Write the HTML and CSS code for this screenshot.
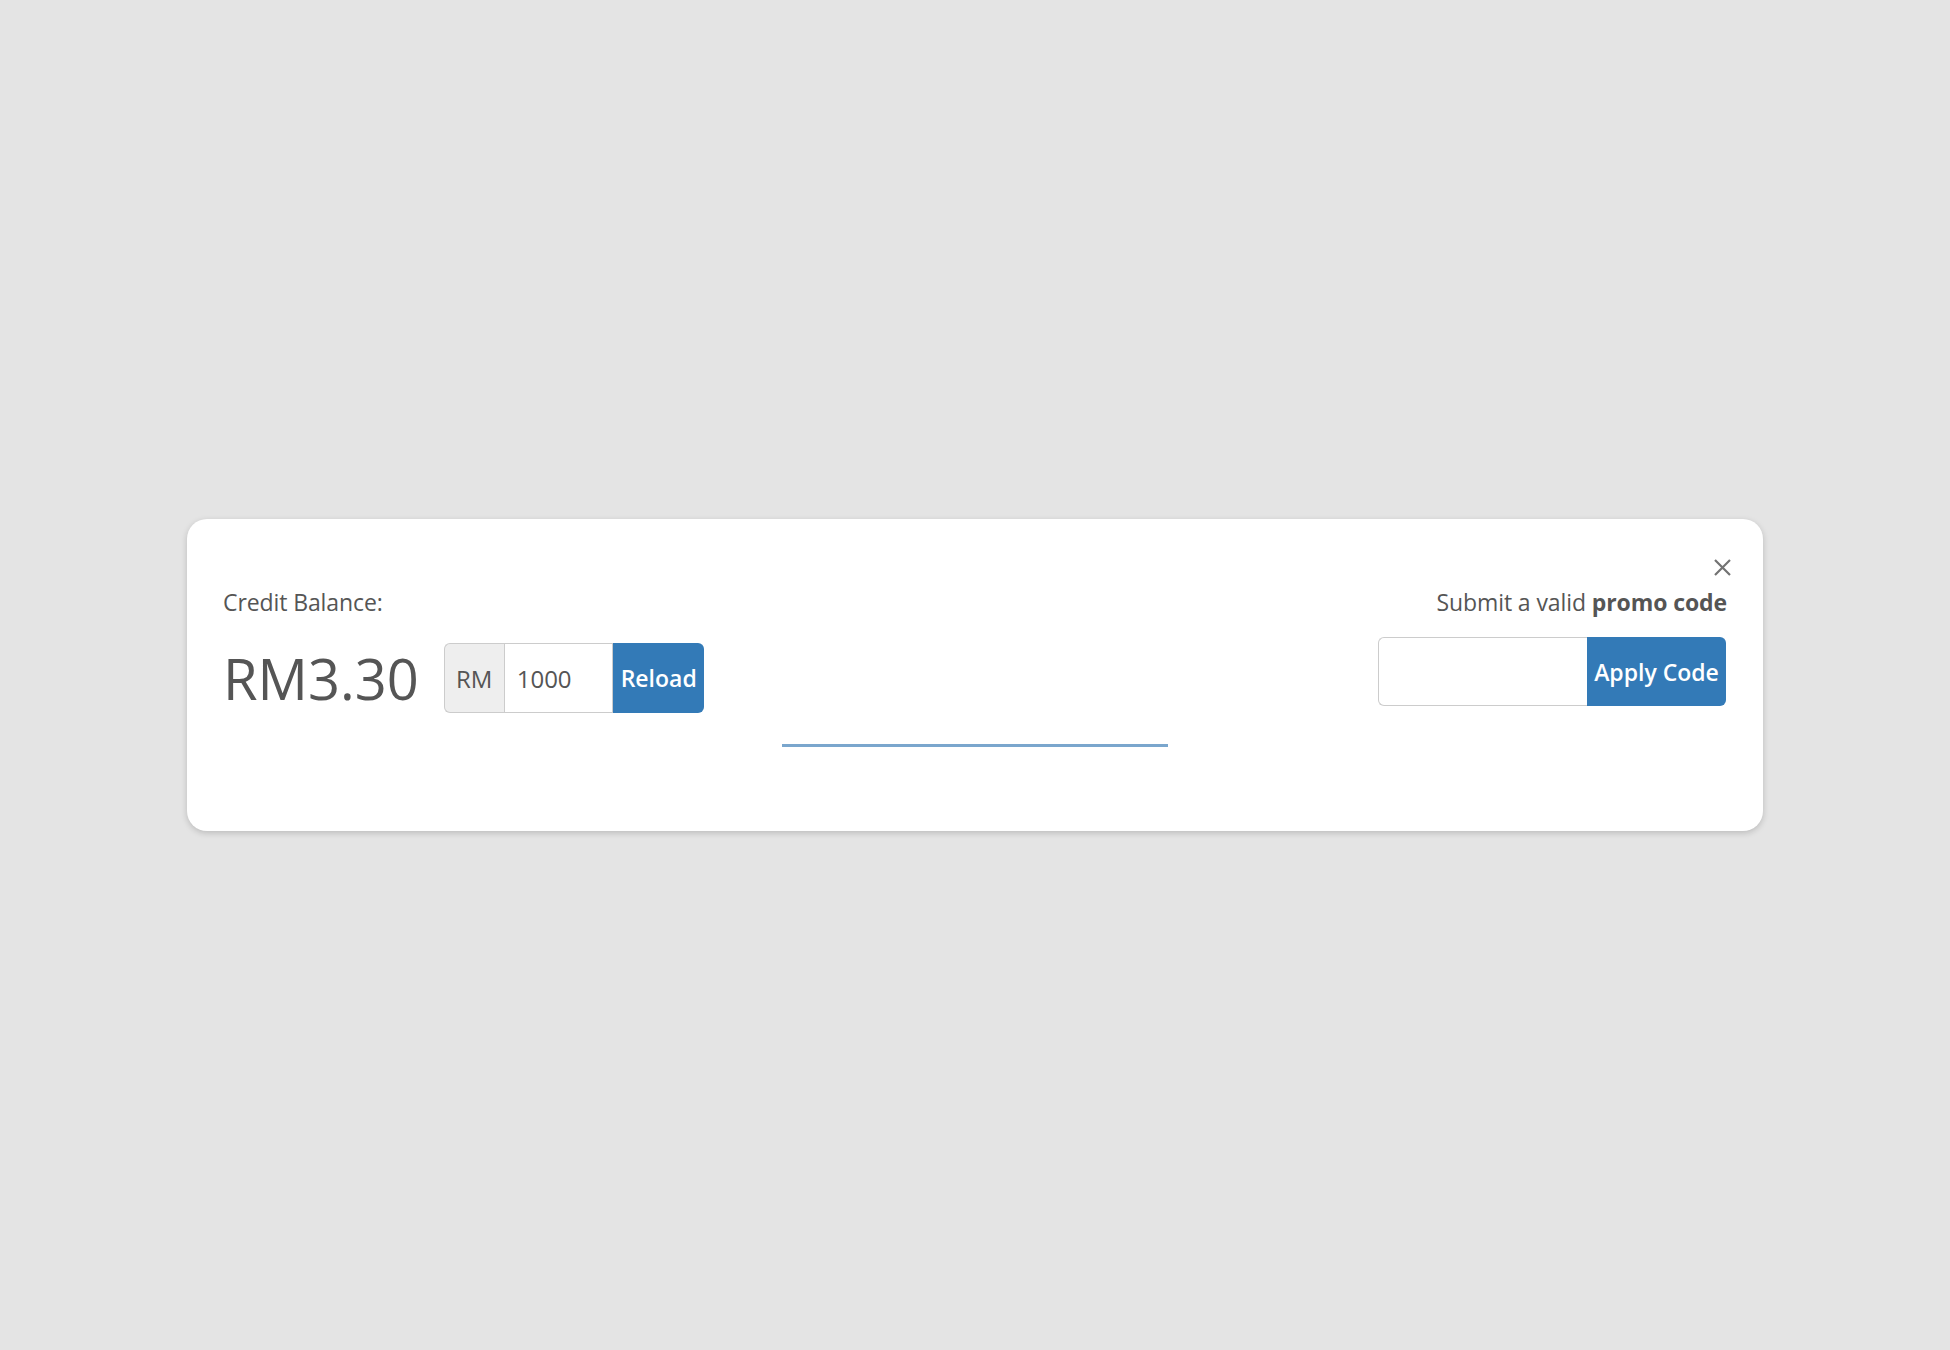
FILE: index.html
```html
<!DOCTYPE html>
<html>
<head>
<meta charset="utf-8">
<link rel="stylesheet" href="styles.css">
</head>
<body>
<div class="page">
  <div class="card">
    <div class="close-row">
      <button class="close" aria-label="Close">
        <svg width="19" height="19" viewBox="0 0 19 19"><path d="M2 2 L17 17 M17 2 L2 17" stroke="#737373" stroke-width="2.2" stroke-linecap="butt" fill="none"/></svg>
      </button>
    </div>
    <div class="main-row">
      <div class="left-col">
        <div class="label">Credit Balance:</div>
        <div class="amount-row">
          <div class="amount">RM3.30</div>
          <div class="input-group">
            <span class="addon">RM</span>
            <span class="field reload-field">1000</span>
            <button class="btn reload">Reload</button>
          </div>
        </div>
      </div>
      <div class="right-col">
        <div class="label">Submit a valid <b>promo code</b></div>
        <div class="input-group promo-group">
          <span class="field promo-field"></span>
          <button class="btn apply">Apply Code</button>
        </div>
      </div>
    </div>
    <div class="progress"></div>
  </div>
</div>
</body>
</html>
```

FILE: styles.css
```css
html, body {
  margin: 0;
  padding: 0;
}
body {
  background: #e4e4e4;
  font-family: "Open Sans", "Noto Sans", sans-serif;
  color: #555;
}
.page {
  height: 1350px;
  display: flex;
  align-items: center;
  justify-content: center;
}
.card {
  width: 1576px;
  height: 312px;
  box-sizing: border-box;
  background: #fff;
  border-radius: 20px;
  box-shadow: 0 2px 6px rgba(0, 0, 0, 0.18);
  padding: 39px 36px 0 36px;
  display: flex;
  flex-direction: column;
}
.close-row {
  display: flex;
  justify-content: flex-end;
  height: 19px;
}
.close {
  border: 0;
  background: none;
  padding: 0;
  margin-right: -5px;
  width: 19px;
  height: 19px;
  display: block;
}
.close svg { display: block; }
.main-row {
  display: flex;
  justify-content: space-between;
  margin-top: 9px;
}
.label {
  font-size: 23px;
  line-height: 32px;
  letter-spacing: -0.1px;
}
.label b { font-weight: 700; }
.right-col {
  display: flex;
  flex-direction: column;
  align-items: flex-end;
}
.amount-row {
  display: flex;
  align-items: center;
  margin-top: 25px;
  height: 70px;
}
.amount {
  font-size: 56px;
  line-height: 70px;
  margin-right: 25px;
}
.input-group {
  display: flex;
  height: 70px;
}
.addon {
  box-sizing: border-box;
  width: 60px;
  background: #eee;
  border: 1px solid #ccc;
  border-right: 0;
  border-radius: 6px 0 0 6px;
  font-size: 24px;
  display: flex;
  align-items: center;
  justify-content: center;
  color: #555;
}
.field {
  box-sizing: border-box;
  background: #fff;
  border: 1px solid #ccc;
  font-size: 24px;
  display: flex;
  align-items: center;
  color: #555;
}
.reload-field {
  width: 109px;
  padding-left: 12px;
}
.btn {
  border: 0;
  background: #337ab7;
  color: #fff;
  font-family: "Open Sans", "Noto Sans", sans-serif;
  font-weight: 600;
  font-size: 23px;
  padding: 0;
  height: 100%;
}
.reload {
  width: 91px;
  border-radius: 0 6px 6px 0;
  padding-left: 1px;
}
.promo-group {
  height: 69px;
  margin-top: 19px;
  margin-right: 1px;
}
.promo-field {
  width: 209px;
  border-radius: 6px 0 0 6px;
  border-right: 0;
}
.apply {
  width: 139px;
  border-radius: 0 6px 6px 0;
}
.progress {
  align-self: center;
  width: 386px;
  height: 3px;
  background: #7aa6cd;
  margin-top: 31px;
}
```
